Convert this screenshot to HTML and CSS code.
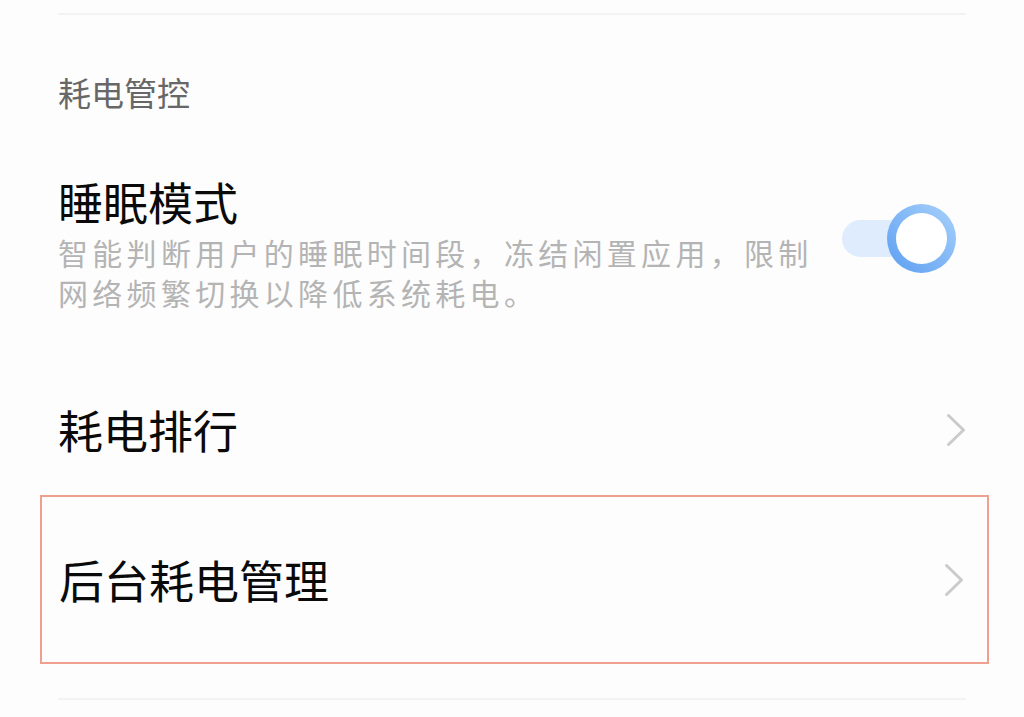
FILE: index.html
```html
<!DOCTYPE html>
<html lang="zh-CN">
<head>
<meta charset="utf-8">
<link rel="stylesheet" href="styles.css">
</head>
<body>
<div class="page">
  <div class="divider top"></div>
  <div class="section-title">耗电管控</div>

  <div class="item sleep">
    <div class="item-text">
      <div class="item-title">睡眠模式</div>
      <div class="item-desc">智能判断用户的睡眠时间段，冻结闲置应用，限制网络频繁切换以降低系统耗电。</div>
    </div>
    <div class="toggle">
      <div class="track"></div>
      <div class="knob"></div>
    </div>
  </div>

  <div class="item nav rank">
    <div class="item-title">耗电排行</div>
    <svg class="chev" width="20" height="34" viewBox="0 0 20 34"><polyline points="2.5,2.5 17.5,17 2.5,31.5" fill="none" stroke="#cbcbcb" stroke-width="3" stroke-linecap="round" stroke-linejoin="round"/></svg>
  </div>

  <div class="item nav boxed">
    <div class="item-title">后台耗电管理</div>
    <svg class="chev" width="20" height="34" viewBox="0 0 20 34"><polyline points="2.5,2.5 17.5,17 2.5,31.5" fill="none" stroke="#cbcbcb" stroke-width="3" stroke-linecap="round" stroke-linejoin="round"/></svg>
  </div>

  <div class="divider bottom"></div>
</div>
</body>
</html>
```

FILE: styles.css
```css
html, body {
  margin: 0;
  padding: 0;
  background: #fdfdfd;
}
body {
  font-family: "Noto Sans CJK SC", "Noto Sans", sans-serif;
  width: 1024px;
  height: 717px;
  overflow: hidden;
}
.page {
  padding: 0 58px;
}
.divider {
  height: 2px;
  background: #f3f3f3;
}
.divider.top {
  margin-top: 13px;
}
.divider.bottom {
  margin-top: 34px;
}
.section-title {
  margin-top: 61px;
  font-size: 33px;
  line-height: 33px;
  color: #676767;
}
.item {
  display: flex;
}
.sleep {
  padding-top: 70px;
  align-items: flex-start;
}
.item-text {
  flex: 1;
}
.item-title {
  font-size: 45px;
  line-height: 45px;
  color: #0a0a0a;
}
.item-desc {
  margin-top: 8px;
  max-width: 775px;
  font-size: 30px;
  line-height: 40px;
  letter-spacing: 4.3px;
  color: #b4b4b4;
}
.toggle {
  position: relative;
  width: 114px;
  height: 69px;
  margin-top: 25px;
  margin-right: 10px;
  flex: none;
}
.track {
  position: absolute;
  left: 0;
  top: 16px;
  width: 84px;
  height: 37px;
  border-radius: 18.5px;
  background: #dfecfd;
}
.knob {
  position: absolute;
  right: 0;
  top: 0;
  width: 69px;
  height: 69px;
  box-sizing: border-box;
  border-radius: 50%;
  border: 9px solid transparent;
  background-image: linear-gradient(#ffffff, #ffffff), linear-gradient(45deg, #5c9ef1, #a8d1fb);
  background-origin: border-box;
  background-clip: padding-box, border-box;
}
.nav {
  align-items: center;
  justify-content: space-between;
}
.rank {
  padding-top: 95px;
  padding-bottom: 43px;
}
.chev {
  flex: none;
  margin-right: 0;
}
.boxed {
  height: 169px;
  box-sizing: border-box;
  margin: 0 -23px 0 -18px;
  padding: 0 23px 0 17px;
  border: 2px solid #f0a08e;
}
```
